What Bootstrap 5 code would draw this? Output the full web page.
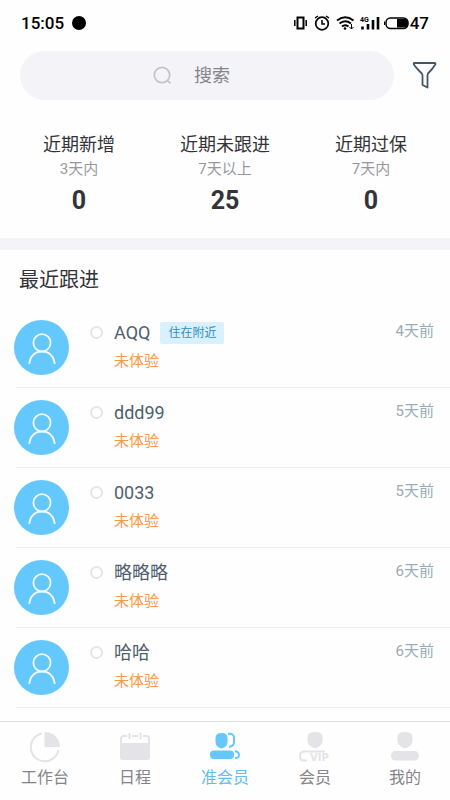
<!DOCTYPE html>
<html lang="zh-CN">
<head>
<meta charset="utf-8">
<meta name="viewport" content="width=device-width, initial-scale=1">
<title>准会员</title>
<link href="https://cdn.jsdelivr.net/npm/bootstrap@5.3.0/dist/css/bootstrap.min.css" rel="stylesheet">
<style>
body{font-family:Roboto,"Noto Sans CJK SC",sans-serif;background:#fefefe;color:#333338;line-height:24px}
svg{display:block;flex-shrink:0}
.status-bar{height:45px;padding:0 21px;font-size:17px;font-weight:500;color:#000}
.chat-dot{width:14px;height:14px;background:#000}
.top-search{padding:6px 12px 0 20px;gap:18px}
.search-box{height:49px;background:#f4f3f7;gap:21px;padding-left:132px}
.search-box input{font-size:18px;color:#858589;outline:0;min-width:0}
.search-box input::placeholder{color:#858589;opacity:1}
.stats{padding:33px 6px 21px;border-bottom:12px solid #f4f3f7}
.stat-name{font-size:18px}
.stat-range{font-size:15px;color:#98989c}
.stat-value{font-size:25px;line-height:32px;margin-top:4px;margin-bottom:0}
.section-title{font-size:20px;padding:18px 19px 15px;margin:0;font-weight:400}
.member{height:80px;padding:14px 16px 0 14px;color:#4f5f6d}
.member + .member::before{content:"";position:absolute;left:16px;right:0;top:0;height:1px;background:#efeff3}
.avatar{width:55px;height:55px;background:#64c8fd;margin-right:21px;margin-top:-1px}
.pick{width:13px;height:13px;border:2px solid #e6e5ea;margin:5px 11px 0 0;background:#fff}
.member-name{font-size:18px}
.tag{font-size:12px;line-height:22px;background:#d9f0fd;color:#348fc2;padding:0 8px;border-radius:2px;margin-left:10px}
.state{font-size:15px;color:#f29b4c;margin-top:4px}
.ago{font-size:15px;color:#9aabb9;margin-top:-2px}
.tabs{border-top:1px solid #e2e1e7;background:#fefefe;height:79px;padding-top:9px}
.tabs a{font-size:16px;color:#858589;text-decoration:none}
.tabs a.current{color:#64bcee}
.tabs svg{margin-bottom:3px}
.vip-text{font:700 10px "DejaVu Sans",sans-serif}
</style>
<script src="https://cdn.jsdelivr.net/npm/bootstrap@5.3.0/dist/js/bootstrap.bundle.min.js"></script>
</head>
<body class="vh-100 d-flex flex-column overflow-hidden">
<svg class="d-none">
  <symbol id="person" viewBox="0 0 55 55"><g fill="none" stroke="#f2fbff" stroke-width="1.800"><circle cx="28" cy="22.800" r="8.600"/><path d="M15.500 44V42C17 35 22 31.500 28 31.500S39 35 40.500 42V44"/></g></symbol>
</svg>
<header class="flex-shrink-0">
  <div class="status-bar d-flex align-items-center justify-content-between">
    <div class="d-flex align-items-center gap-2"><span>15:05</span><span class="chat-dot rounded-circle"></span></div>
    <div class="d-flex align-items-center">
      <svg width="116" height="18" viewBox="0 0 116 18" fill="none" stroke="#000">
        <path d="M3.500 3.500h6v11h-6z" stroke-width="2"/><path d="M.8 6v6M12.200 6v6" stroke-width="1.500"/>
        <circle cx="28" cy="9.500" r="6.300" stroke-width="1.700"/><path d="M28 6v4h3M21 4l3-2M35 4l-3-2" stroke-width="1.500"/>
        <path d="M43 6.500q8-6.500 16.500 0M45.500 9.500q5.500-4.500 11.500 0M48 12.500q3-2.500 6.500 0" stroke-width="2"/><circle cx="51" cy="14.500" r="1.300" fill="#000" stroke="none"/><path d="M57.500 10v5M55.500 13l2 2 2-2" stroke-width="1"/>
        <path d="M68.500 12.500v3M74 10v5.500M79 6v9.500M84 3v12.500" stroke-width="2.600"/>
        <text x="66" y="8" font-size="7" font-weight="700" fill="#000" stroke="none">4G</text>
        <rect x="92" y="4" width="22" height="10.500" rx="4.500" stroke-width="1.500"/><path d="M103 5h8q3 0 3 4.300t-3 4.300h-8z" fill="#000" stroke="none"/><path d="M90.500 7.500v3.500"/>
      </svg><span>47</span>
    </div>
  </div>
  <div class="top-search d-flex align-items-center">
    <label class="search-box flex-grow-1 rounded-pill d-flex align-items-center">
      <svg width="21" height="21" viewBox="0 0 21 21" fill="none" stroke="#c3c3c8" stroke-width="1.700"><circle cx="10" cy="10" r="7.700"/><path d="m15.500 15.500 3 3"/></svg>
      <input class="border-0 bg-transparent p-0 w-100" type="search" placeholder="搜索" aria-label="搜索">
    </label>
    <button class="btn p-0 border-0" type="button" aria-label="筛选"><svg width="26" height="30" viewBox="0 0 26 30" fill="none" stroke="#465763" stroke-width="1.800" stroke-linejoin="round"><path d="M2.500 2h20q1.500 0 .8 1.500Q20.500 8 16 12.500q-.5 1-.5 2V26.500L10.500 24V14.500q0-1-.7-2Q5 8 1.800 3.500Q1.300 2 2.500 2Z"/></svg></button>
  </div>
  <section class="stats row g-0 text-center">
    <div class="col-4"><div class="stat-name">近期新增</div><div class="stat-range">3天内</div><p class="stat-value fw-bold">0</p></div>
    <div class="col-4"><div class="stat-name">近期未跟进</div><div class="stat-range">7天以上</div><p class="stat-value fw-bold">25</p></div>
    <div class="col-4"><div class="stat-name">近期过保</div><div class="stat-range">7天内</div><p class="stat-value fw-bold">0</p></div>
  </section>
</header>
<main class="flex-grow-1 overflow-hidden">
  <h1 class="section-title">最近跟进</h1>
  <ul class="list-unstyled m-0">
    <li class="member position-relative d-flex align-items-start"><svg class="avatar rounded-circle"><use href="#person"/></svg><input class="pick form-check-input flex-shrink-0" type="radio" name="m" aria-label="AQQ"><div class="flex-grow-1"><div class="d-flex align-items-center"><span class="member-name">AQQ</span><span class="tag">住在附近</span></div><div class="state">未体验</div></div><time class="ago">4天前</time></li>
    <li class="member position-relative d-flex align-items-start"><svg class="avatar rounded-circle"><use href="#person"/></svg><input class="pick form-check-input flex-shrink-0" type="radio" name="m" aria-label="ddd99"><div class="flex-grow-1"><div class="member-name">ddd99</div><div class="state">未体验</div></div><time class="ago">5天前</time></li>
    <li class="member position-relative d-flex align-items-start"><svg class="avatar rounded-circle"><use href="#person"/></svg><input class="pick form-check-input flex-shrink-0" type="radio" name="m" aria-label="0033"><div class="flex-grow-1"><div class="member-name">0033</div><div class="state">未体验</div></div><time class="ago">5天前</time></li>
    <li class="member position-relative d-flex align-items-start"><svg class="avatar rounded-circle"><use href="#person"/></svg><input class="pick form-check-input flex-shrink-0" type="radio" name="m" aria-label="略略略"><div class="flex-grow-1"><div class="member-name">略略略</div><div class="state">未体验</div></div><time class="ago">6天前</time></li>
    <li class="member position-relative d-flex align-items-start"><svg class="avatar rounded-circle"><use href="#person"/></svg><input class="pick form-check-input flex-shrink-0" type="radio" name="m" aria-label="哈哈"><div class="flex-grow-1"><div class="member-name">哈哈</div><div class="state">未体验</div></div><time class="ago">6天前</time></li>
    <li class="member position-relative"></li>
  </ul>
</main>
<nav class="tabs flex-shrink-0 d-flex">
  <a href="#" class="col d-flex flex-column align-items-center"><svg width="32" height="32" viewBox="0 0 32 32"><path d="M13 2.500A14 14 0 1 0 29.500 19" fill="none" stroke="#e4e3e8" stroke-width="2"/><path d="M15.500 1A15 15 0 0 1 31 16H15.500z" fill="#e4e3e8"/></svg>工作台</a>
  <a href="#" class="col d-flex flex-column align-items-center"><svg width="32" height="32" viewBox="0 0 32 32"><rect x="2" y="5" width="28" height="23" rx="3" fill="none" stroke="#e4e3e8" stroke-width="2"/><path d="M1 12h30v14q0 3-3 3H4q-3 0-3-3z" fill="#e4e3e8"/><path d="M10.500 1v7M21.500 1v7" stroke="#fefefe" stroke-width="5"/><path d="M10.500 2v6M21.500 2v6M13 5h6" stroke="#e4e3e8" stroke-width="2"/></svg>日程</a>
  <a href="#" class="col d-flex flex-column align-items-center current" aria-current="page"><svg width="32" height="32" viewBox="0 0 32 32" fill="#64c8fd"><path d="M6.500 7q0-5 6-5t6 5v4q0 5-6 6.500Q6.500 16 6.500 11z"/><rect x="1" y="19.500" width="24" height="8.500" rx="4"/><path d="M19 3q6-1 6 4v4q0 4-5 5M26 20q4 1 4 4 0 3-4 3" fill="none" stroke="#64c8fd" stroke-width="2"/></svg>准会员</a>
  <a href="#" class="col d-flex flex-column align-items-center"><svg width="32" height="32" viewBox="0 0 32 32" fill="#e4e3e8"><path d="M8.500 6q0-5 7.500-5t7.500 5v4q0 5-7.500 7.500Q8.500 15 8.500 10z"/><path d="M26 20.500H5q-4 0-4 4.500 0 4.500 3 4.500h4" fill="none" stroke="#e4e3e8" stroke-width="2"/><text class="vip-text" x="11" y="30">VIP</text></svg>会员</a>
  <a href="#" class="col d-flex flex-column align-items-center"><svg width="32" height="32" viewBox="0 0 32 32" fill="#e4e3e8"><path d="M8.500 6q0-5 7.500-5t7.500 5v4q0 5-7.500 7.500Q8.500 15 8.500 10z"/><rect x="2" y="20" width="28" height="9.500" rx="4.500"/></svg>我的</a>
</nav>
</body>
</html>
